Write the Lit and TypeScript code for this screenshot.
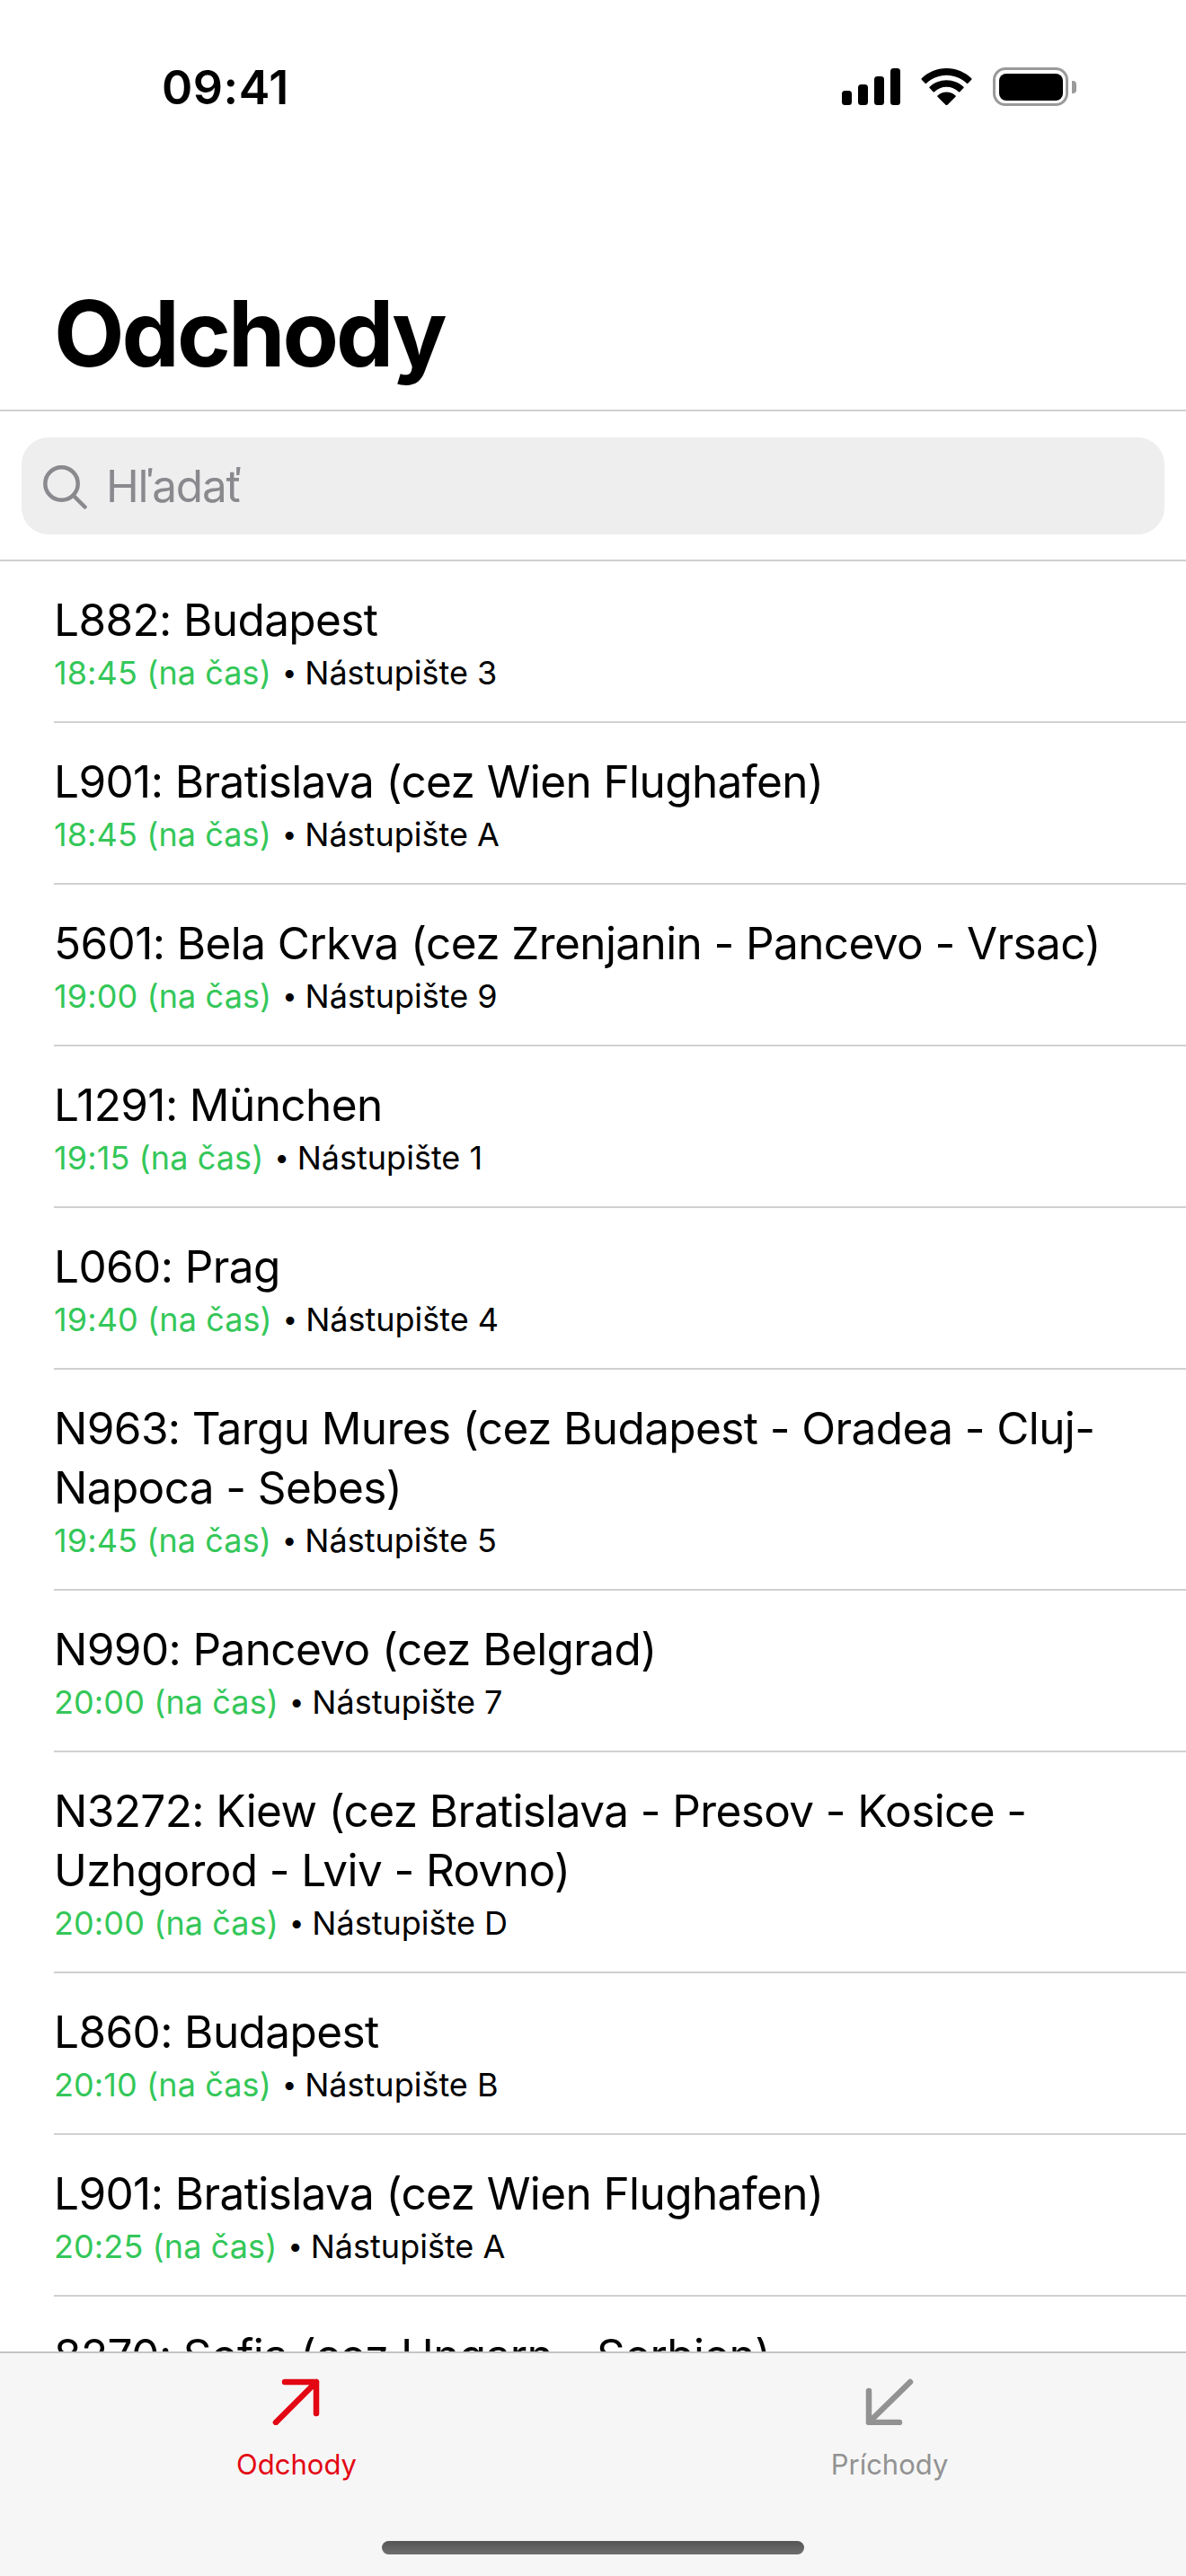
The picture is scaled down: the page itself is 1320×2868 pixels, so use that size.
import { LitElement, css, html, svg } from 'lit';
import { customElement } from 'lit/decorators.js';

interface Departure {
  title: string;
  time: string;
  platform: string;
}

const departures: Departure[] = [
  { title: 'L882: Budapest', time: '18:45 (na čas)', platform: 'Nástupište 3' },
  { title: 'L901: Bratislava (cez Wien Flughafen)', time: '18:45 (na čas)', platform: 'Nástupište A' },
  { title: '5601: Bela Crkva (cez Zrenjanin - Pancevo - Vrsac)', time: '19:00 (na čas)', platform: 'Nástupište 9' },
  { title: 'L1291: München', time: '19:15 (na čas)', platform: 'Nástupište 1' },
  { title: 'L060: Prag', time: '19:40 (na čas)', platform: 'Nástupište 4' },
  { title: 'N963: Targu Mures (cez Budapest - Oradea - Cluj-Napoca - Sebes)', time: '19:45 (na čas)', platform: 'Nástupište 5' },
  { title: 'N990: Pancevo (cez Belgrad)', time: '20:00 (na čas)', platform: 'Nástupište 7' },
  { title: 'N3272: Kiew (cez Bratislava - Presov - Kosice - Uzhgorod - Lviv - Rovno)', time: '20:00 (na čas)', platform: 'Nástupište D' },
  { title: 'L860: Budapest', time: '20:10 (na čas)', platform: 'Nástupište B' },
  { title: 'L901: Bratislava (cez Wien Flughafen)', time: '20:25 (na čas)', platform: 'Nástupište A' },
  { title: '8270: Sofia (cez Ungarn - Serbien)', time: '20:40 (na čas)', platform: 'Nástupište 2' },
];

const signalIcon = svg`<rect x="0" y="25" width="11" height="16" rx="3.5"/><rect x="18" y="18" width="11" height="23" rx="3.5"/><rect x="36" y="9" width="11" height="32" rx="3.5"/><rect x="54" y="0" width="11" height="41" rx="3.5"/>`;

const wifiIcon = svg`<path d="M28.5 0C17.500 0 7.600 4.400.3 11.500a1 1 0 0 0 0 1.400l4 4.200a1 1 0 0 0 1.400 0C11.600 11.300 19.600 7.800 28.500 7.800s16.900 3.500 22.800 9.300a1 1 0 0 0 1.400 0l4-4.200a1 1 0 0 0 0-1.400C49.400 4.400 39.500 0 28.500 0zM28.500 13.500c-7.400 0-14.200 2.900-19.200 7.600a1 1 0 0 0 0 1.400l4.100 4.200a1 1 0 0 0 1.400 0c3.600-3.400 8.400-5.500 13.700-5.500s10.100 2.100 13.700 5.500a1 1 0 0 0 1.400 0l4.100-4.200a1 1 0 0 0 0-1.400c-5-4.700-11.800-7.600-19.200-7.600zM28.500 27c-3.900 0-7.500 1.500-10.200 3.900a1 1 0 0 0 0 1.400l9.500 9.400a1 1 0 0 0 1.400 0l9.500-9.400a1 1 0 0 0 0-1.400C36 28.500 32.400 27 28.500 27z"/>`;

@customElement('app-root')
export class AppRoot extends LitElement {
  static styles = css`
    :host {
      display: block;
      width: 1320px;
      height: 2868px;
      font-family: Inter, 'Liberation Sans', sans-serif;
      color: #000;
      background: #fff;
    }

    .screen {
      position: relative;
      display: flex;
      flex-direction: column;
      height: 2868px;
      overflow: hidden;
    }

    .status {
      flex: none;
      height: 186px;
      display: flex;
      justify-content: space-between;
      align-items: flex-start;
      padding: 73px 122px 0 180px;
      box-sizing: border-box;
    }

    .clock {
      font-size: 52px;
      line-height: 50px;
      font-weight: 600;
      letter-spacing: 0.5px;
    }

    .status-icons {
      display: flex;
      align-items: flex-start;
      gap: 23px;
      padding-top: 3px;
    }

    .status-icons svg {
      display: block;
      fill: #000;
    }

    .battery {
      display: flex;
      align-items: center;
      gap: 4px;
      margin-top: -1px;
    }

    .battery-body {
      width: 84px;
      height: 43px;
      box-sizing: border-box;
      border: 3.5px solid #9a9a9a;
      border-radius: 14px;
      padding: 3.5px;
    }

    .battery-fill {
      height: 100%;
      background: #000;
      border-radius: 8px;
    }

    .battery-cap {
      width: 5px;
      height: 14px;
      background: #9a9a9a;
      border-radius: 0 4px 4px 0;
    }

    h1 {
      flex: none;
      margin: 0;
      height: 270px;
      font-size: 102px;
      line-height: 124px;
      font-weight: 700;
      letter-spacing: -3px;
      padding: 123px 0 0 60px;
      box-sizing: border-box;
    }

    .search-wrap {
      flex: none;
      height: 169px;
      padding: 29px 24px 0;
      box-sizing: border-box;
      border-top: 2px solid #d0d0d3;
      border-bottom: 2px solid #d0d0d3;
    }

    .search {
      height: 108px;
      display: flex;
      align-items: center;
      gap: 21px;
      padding-left: 24px;
      background: #eeeeef;
      border-radius: 30px;
    }

    .search svg {
      display: block;
      flex: none;
      margin-top: 3px;
    }

    .search span {
      font-size: 49.5px;
      letter-spacing: -1.2px;
      color: #8a8a8e;
    }

    .list {
      flex: 1;
      min-height: 0;
      overflow: hidden;
      padding-left: 60px;
    }

    .row {
      padding: 32px 60px 31px 0;
      border-bottom: 2px solid #d0d0d3;
      box-sizing: border-box;
    }

    .row-title {
      font-size: 49.5px;
      line-height: 66px;
      letter-spacing: -0.6px;
    }

    .row-sub {
      font-size: 36px;
      line-height: 46px;
      margin-top: 3px;
      display: flex;
      align-items: center;
    }

    .time {
      color: #34c759;
      letter-spacing: 0.1px;
    }

    .dot {
      margin: 0 9px 0 12px;
      font-size: 29px;
    }

    .tabbar {
      position: absolute;
      left: 0;
      right: 0;
      bottom: 0;
      height: 250px;
      display: grid;
      grid-template-columns: 1fr 1fr;
      background: #f6f6f6;
      border-top: 2px solid #c4c4c6;
      box-sizing: border-box;
    }

    .tab {
      display: flex;
      flex-direction: column;
      align-items: center;
      padding-top: 26px;
      color: #929292;
      font-size: 31px;
      line-height: 40px;
      font-weight: 400;
    }

    .tab svg {
      display: block;
      margin-bottom: 24px;
    }

    .tab.active {
      color: #e30613;
    }

    .home-bar {
      position: absolute;
      left: 50%;
      bottom: 24px;
      width: 470px;
      height: 15px;
      margin-left: -235px;
      border-radius: 8px;
      background: linear-gradient(#555, #6e6e6e);
    }
  `;

  private renderRow(item: Departure) {
    return html`
      <div class="row">
        <div class="row-title">${item.title}</div>
        <div class="row-sub">
          <span class="time">${item.time}</span>
          <span class="dot">•</span>
          <span>${item.platform}</span>
        </div>
      </div>
    `;
  }

  render() {
    return html`
      <div class="screen">
        <div class="status">
          <span class="clock">09:41</span>
          <div class="status-icons">
            <svg width="65" height="41" viewBox="0 0 65 41">${signalIcon}</svg>
            <svg width="57" height="41" viewBox="0 0 57 41.7">${wifiIcon}</svg>
            <div class="battery">
              <div class="battery-body"><div class="battery-fill"></div></div>
              <div class="battery-cap"></div>
            </div>
          </div>
        </div>
        <h1>Odchody</h1>
        <div class="search-wrap">
          <div class="search">
            <svg width="49" height="49" viewBox="0 0 49 49" fill="none" stroke="#8a8a8e" stroke-width="4.500" stroke-linecap="round">
              <circle cx="20.500" cy="20.500" r="18.200"></circle>
              <path d="M33.500 33.500 46.500 46.500"></path>
            </svg>
            <span>Hľadať</span>
          </div>
        </div>
        <div class="list">${departures.map(d => this.renderRow(d))}</div>
        <div class="tabbar">
          <div class="tab active">
            <svg width="54" height="54" viewBox="0 0 54 54" fill="none" stroke="currentColor" stroke-width="6.500" stroke-linecap="round" stroke-linejoin="round">
              <path d="M4 51 49 6M14 6h35v35"></path>
            </svg>
            <span>Odchody</span>
          </div>
          <div class="tab">
            <svg width="54" height="54" viewBox="0 0 54 54" fill="none" stroke="currentColor" stroke-width="6.500" stroke-linecap="round" stroke-linejoin="round">
              <path d="M50 6 4 51M38 51H4V16"></path>
            </svg>
            <span>Príchody</span>
          </div>
        </div>
        <div class="home-bar"></div>
      </div>
    `;
  }
}
